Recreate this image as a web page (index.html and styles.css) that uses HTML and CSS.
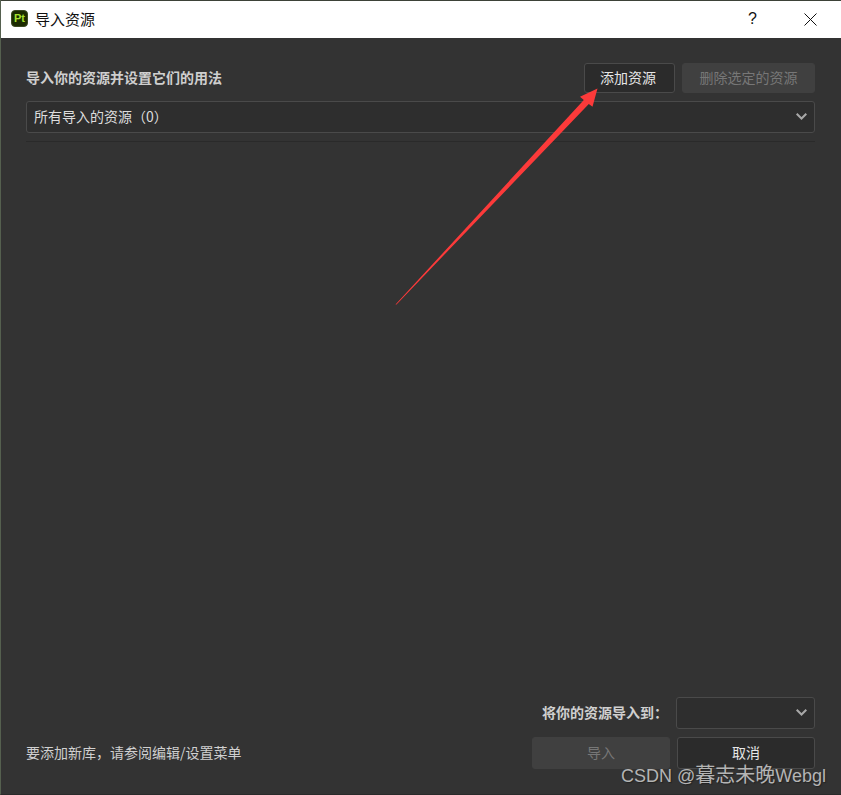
FILE: index.html
```html
<!DOCTYPE html>
<html lang="zh-CN">
<head>
    <meta charset="UTF-8">
    <meta name="viewport" content="width=device-width, initial-scale=1.0">
    <title>导入资源</title>
    <link rel="stylesheet" href="styles.css">
</head>
<body>
    <div class="window">
        <!-- Barra de titulo -->
        <div class="titlebar">
            <div class="app-icon">Pt</div>
            <span class="window-title">导入资源</span>
            <span class="help">?</span>
            <svg class="close" width="13" height="13" viewBox="0 0 13 13">
                <path d="M0.5 0.5 L12.5 12.5 M12.5 0.5 L0.5 12.5" stroke="#111" stroke-width="1" fill="none"/>
            </svg>
        </div>

        <div class="content">
            <div class="toolbar">
                <span class="heading">导入你的资源并设置它们的用法</span>
                <div class="btn add-btn">添加资源</div>
                <div class="btn disabled delete-btn">删除选定的资源</div>
            </div>

            <div class="select wide">
                <span>所有导入的资源（0）</span>
                <svg class="chevron" width="11" height="7" viewBox="0 0 11 7">
                    <path d="M0.7 0.7 L5.5 5.5 L10.3 0.7" stroke="#a8a8a8" stroke-width="2" fill="none"/>
                </svg>
            </div>
            <div class="divider"></div>

            <div class="spacer"></div>

            <div class="dest-row">
                <span class="heading">将你的资源导入到：</span>
                <div class="select dest">
                    <svg class="chevron" width="11" height="7" viewBox="0 0 11 7">
                        <path d="M0.7 0.7 L5.5 5.5 L10.3 0.7" stroke="#a8a8a8" stroke-width="2" fill="none"/>
                    </svg>
                </div>
            </div>

            <div class="actions">
                <span class="hint">要添加新库，请参阅编辑/设置菜单</span>
                <div class="btn disabled import-btn">导入</div>
                <div class="btn cancel-btn">取消</div>
            </div>
        </div>
    </div>

    <!-- Seta vermelha por cima da janela -->
    <svg class="arrow" width="841" height="795" viewBox="0 0 841 795">
        <path d="M395.5 304.5 L583.8 100 L580 96.7 L597.5 88.5 L592.5 106.7 L588.8 104 L396.5 304.5 Z" fill="#fc3a3a"/>
    </svg>

    <div class="watermark">CSDN @<span class="watermark-cjk">暮志未晚</span>Webgl</div>
</body>
</html>
```

FILE: styles.css
```css
* {
    box-sizing: border-box;
}

body {
    margin: 0;
    background-color: #333333;
    font-family: "Noto Sans CJK SC", "Liberation Sans", sans-serif;
    font-size: 14px;
    color: #dddddd;
}

.window {
    position: relative;
    display: flex;
    flex-direction: column;
    width: 841px;
    height: 795px;
    border-left: 1px solid #55604f;
    border-bottom: 1px solid #2a2a2a;
    overflow: hidden;
}

/* Barra de titulo */
.titlebar {
    display: flex;
    align-items: center;
    height: 38px;
    flex-shrink: 0;
    padding-left: 10px;
    background-color: #ffffff;
    border-top: 1px solid #3d4238;
    color: #111111;
}

.app-icon {
    width: 17px;
    height: 17px;
    margin-right: 7px;
    margin-bottom: 2px;
    border-radius: 4px;
    background-color: #1c2b00;
    border: 1px solid #3c4a22;
    color: #a6e22e;
    font-family: "Liberation Sans", sans-serif;
    font-size: 11px;
    font-weight: bold;
    line-height: 15px;
    text-align: center;
}

.window-title {
    padding-bottom: 2px;
    font-size: 15px;
}

.help {
    margin-left: auto;
    margin-right: 47px;
    padding-bottom: 2px;
    font-family: "Liberation Sans", sans-serif;
    font-size: 16px;
}

.close {
    margin-right: 24px;
    margin-bottom: 1px;
}

/* Conteudo */
.content {
    flex: 1;
    display: flex;
    flex-direction: column;
    padding: 25px 26px 25px 25px;
}

.toolbar {
    display: flex;
    align-items: center;
    height: 30px;
    margin-bottom: 8px;
}

.heading {
    padding-bottom: 2px;
    font-weight: bold;
    color: #cfcfcf;
}

.btn {
    display: flex;
    align-items: center;
    justify-content: center;
    padding-bottom: 2px;
    border: 1px solid #4a4a4a;
    border-radius: 3px;
    background-color: #2b2b2b;
    color: #e6e6e6;
}

.btn.disabled {
    border-color: #404040;
    background-color: #404040;
    color: #777777;
}

.add-btn {
    width: 91px;
    height: 30px;
    margin-left: auto;
    margin-right: 7px;
    padding-right: 3px;
}

.delete-btn {
    width: 133px;
    height: 30px;
}

.select {
    display: flex;
    align-items: center;
    height: 32px;
    padding: 0 7px 2px 7px;
    border: 1px solid #4a4a4a;
    border-radius: 3px;
    background-color: #2e2e2e;
}

.chevron {
    margin-left: auto;
}

.divider {
    height: 1px;
    margin-top: 8px;
    background-color: #2a2a2a;
}

.spacer {
    flex: 1;
}

.dest-row {
    display: flex;
    align-items: center;
    justify-content: flex-end;
    height: 32px;
    margin-bottom: 8px;
}

.dest {
    width: 139px;
    margin-left: 8px;
}

.actions {
    display: flex;
    align-items: center;
    height: 32px;
}

.hint {
    padding-bottom: 2px;
    color: #d0d0d0;
}

.import-btn {
    width: 138px;
    height: 32px;
    margin-left: auto;
    margin-right: 7px;
}

.cancel-btn {
    width: 138px;
    height: 32px;
}

/* Elementos sobrepostos */
.arrow {
    position: absolute;
    left: 0;
    top: 0;
    pointer-events: none;
}

.watermark {
    position: absolute;
    left: 621px;
    top: 762px;
    font-family: "Liberation Sans", "Noto Sans CJK SC", sans-serif;
    font-size: 18px;
    line-height: 26px;
    color: #b4b4b4;
    text-shadow: 1px 1px 1px #222222;
    white-space: nowrap;
}

.watermark-cjk {
    font-size: 20px;
}
```
